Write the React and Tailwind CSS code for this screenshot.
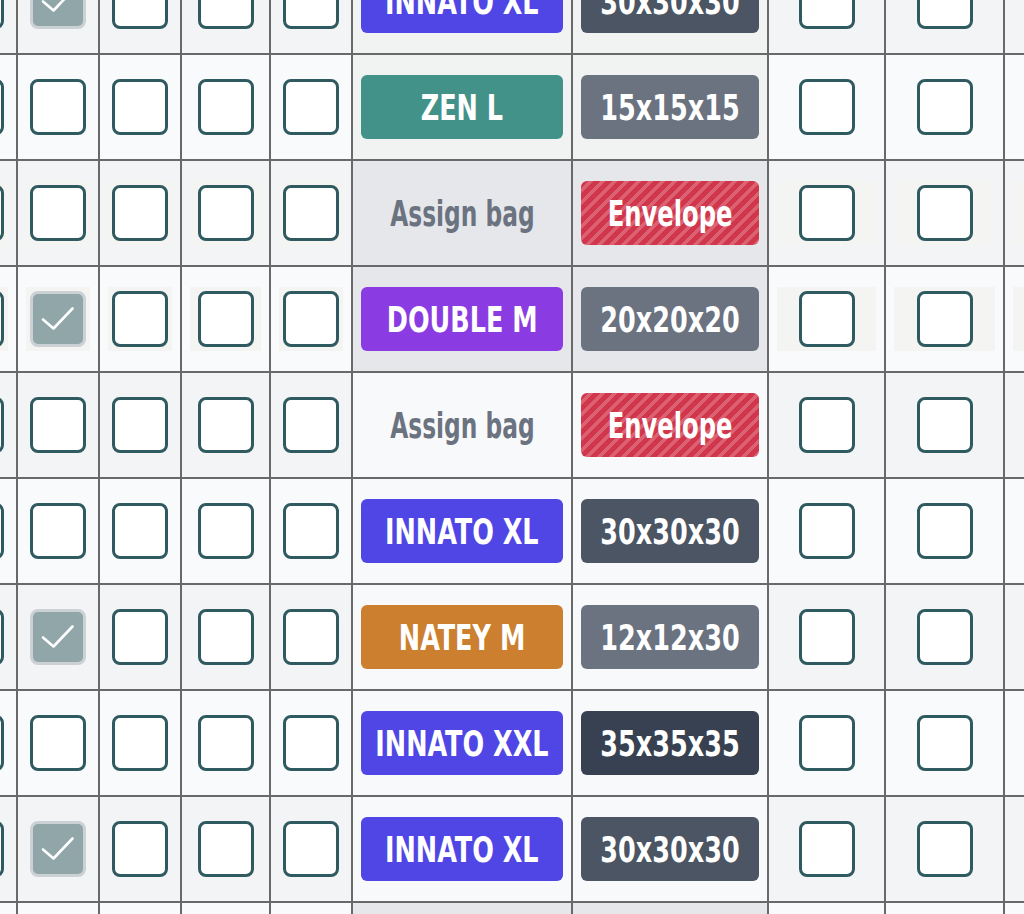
const rows = [
  { bag: 'INNATO XL', bagColor: 'bg-[#4f46e5]', size: '30x30x30', sizeColor: 'bg-[#4b5563]', checked: true, top: true },
  { bag: 'ZEN L', bagColor: 'bg-[#43928a]', size: '15x15x15', sizeColor: 'bg-[#6b7280]', top: true },
  { bag: null, size: 'Envelope', envelope: true, hl: true, dark: true },
  { bag: 'DOUBLE M', bagColor: 'bg-[#8a3be1]', size: '20x20x20', sizeColor: 'bg-[#6b7280]', checked: true, hl: true, dark: true },
  { bag: null, size: 'Envelope', envelope: true },
  { bag: 'INNATO XL', bagColor: 'bg-[#4f46e5]', size: '30x30x30', sizeColor: 'bg-[#4b5563]' },
  { bag: 'NATEY M', bagColor: 'bg-[#cc7f2f]', size: '12x12x30', sizeColor: 'bg-[#6b7280]', checked: true },
  { bag: 'INNATO XXL', bagColor: 'bg-[#4f46e5]', size: '35x35x35', sizeColor: 'bg-[#374151]' },
  { bag: 'INNATO XL', bagColor: 'bg-[#4f46e5]', size: '30x30x30', sizeColor: 'bg-[#4b5563]', checked: true },
  { bag: 'INNATO XL', bagColor: 'bg-[#4f46e5]', size: '30x30x30', sizeColor: 'bg-[#4b5563]', dark: true },
];

function Checkbox({ checked }) {
  if (checked) {
    return (
      <div className="w-14 h-14 rounded-lg border-[3px] border-[#ccd1d5] bg-[#91a6a9]">
        <svg viewBox="0 0 50 50" className="w-full h-full" fill="none" stroke="white" strokeWidth="2.6" strokeLinecap="round" strokeLinejoin="round">
          <path d="M10 25.5 L20.5 34.5 L39.5 14.5" />
        </svg>
      </div>
    );
  }
  return <div className="w-14 h-14 rounded-lg border-[3px] border-[#2f5a60] bg-white" />;
}

function CheckCell({ bg, hl, checked }) {
  return (
    <div className={`${bg} flex items-center px-2`}>
      <div className={`w-full h-16 flex items-center justify-center ${hl ? 'bg-[#f4f4f2]' : ''}`}>
        <Checkbox checked={checked} />
      </div>
    </div>
  );
}

function Badge({ color, narrow, children }) {
  return (
    <div className={`${color} h-16 w-full rounded-md flex items-center justify-center text-white font-bold text-[35px] leading-none whitespace-nowrap pt-[3px]`}>
      <span className={`inline-block ${narrow ? 'scale-x-[0.77]' : 'scale-x-[0.81]'}`}>{children}</span>
    </div>
  );
}

export default function App() {
  return (
    <div className="w-[1024px] h-[914px] overflow-hidden bg-[#f3f4f6] font-['DejaVu_Sans_Condensed','DejaVu_Sans',sans-serif]">
      <div className="w-max -ml-[64px] -mt-[51px] grid grid-cols-[80px_80px_80px_87px_80px_218px_194px_115px_117px_115px] auto-rows-[104px] gap-[2px] bg-[#696969]">
        {rows.map((r, i) => {
          const bg = i % 2 === 0 ? 'bg-[#f3f4f6]' : 'bg-[#f9fafb]';
          const bagBg = r.dark ? 'bg-[#e5e7eb]' : r.top ? 'bg-[#f1f3f2]' : 'bg-[#f8f9fa]';
          return [
            <CheckCell key={`${i}-0`} bg={bg} hl={r.hl} />,
            <CheckCell key={`${i}-1`} bg={bg} hl={r.hl} checked={r.checked} />,
            <CheckCell key={`${i}-2`} bg={bg} hl={r.hl} />,
            <CheckCell key={`${i}-3`} bg={bg} hl={r.hl} />,
            <CheckCell key={`${i}-4`} bg={bg} hl={r.hl} />,
            <div key={`${i}-5`} className={`${bagBg} flex items-center justify-center px-2`}>
              {r.bag ? (
                <Badge color={r.bagColor}>{r.bag}</Badge>
              ) : (
                <span className="inline-block scale-x-[0.74] whitespace-nowrap text-[#6b7280] font-bold text-[35px] leading-none pt-[3px]">Assign bag</span>
              )}
            </div>,
            <div key={`${i}-6`} className={`${bagBg} flex items-center justify-center px-2`}>
              {r.envelope ? (
                <Badge narrow color="bg-[repeating-linear-gradient(135deg,#d1374c_0_5px,#dc6273_5px_8.5px)]">Envelope</Badge>
              ) : (
                <Badge color={r.sizeColor}>{r.size}</Badge>
              )}
            </div>,
            <CheckCell key={`${i}-7`} bg={bg} hl={r.hl} />,
            <CheckCell key={`${i}-8`} bg={bg} hl={r.hl} />,
            <CheckCell key={`${i}-9`} bg={bg} hl={r.hl} />,
          ];
        })}
      </div>
    </div>
  );
}
